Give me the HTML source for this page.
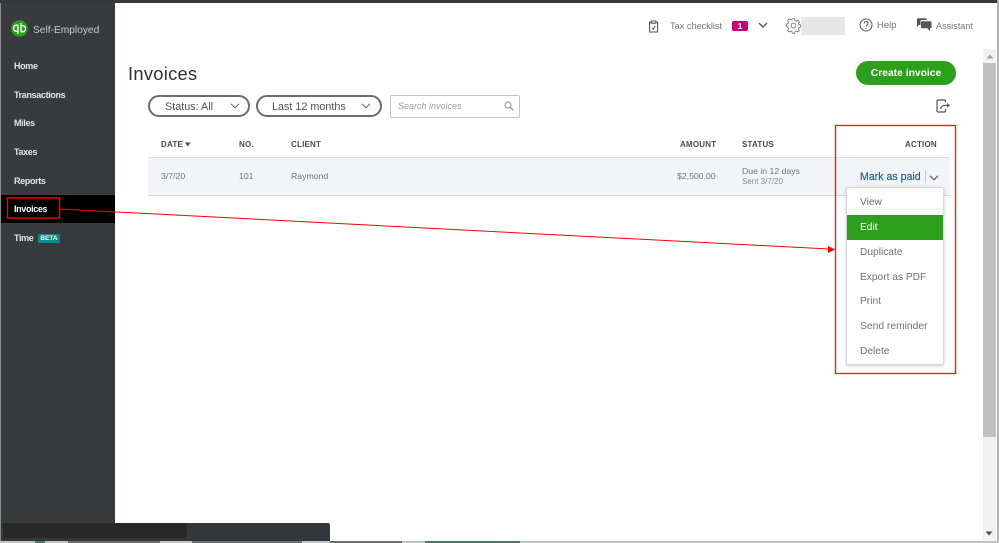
<!DOCTYPE html>
<html>
<head>
<meta charset="utf-8">
<style>
html,body{margin:0;padding:0;background:#fff;}
body{width:999px;height:543px;overflow:hidden;position:relative;font-family:"Liberation Sans",sans-serif;color:#6b6c72;}
.a{position:absolute;white-space:nowrap;}
.nav{position:absolute;left:14px;font-size:9px;letter-spacing:-.35px;font-weight:bold;color:#e4e4e6;line-height:12px;}
.th{position:absolute;top:140px;font-size:8px;font-weight:bold;color:#4a4b50;line-height:10px;letter-spacing:.2px;}
.td{position:absolute;font-size:8.7px;color:#74757a;line-height:12px;}
.mi{position:absolute;left:860px;font-size:10.2px;color:#6f7075;line-height:14px;}
.pill{position:absolute;top:95px;height:18px;border:2px solid #6b6c72;border-radius:12px;background:#fff;font-size:10.8px;color:#4f5056;line-height:20px;}
.frag{position:absolute;top:541px;height:2px;background:#6a6f6c;}
svg{position:absolute;overflow:visible;}
</style>
</head>
<body>
<!-- top bar -->
<div class="a" style="left:0;top:0;width:999px;height:3px;background:#33363a;"></div>
<!-- sidebar -->
<div class="a" style="left:1px;top:3px;width:114px;height:520px;background:#393a3d;"></div>
<div class="a" style="left:0;top:3px;width:1px;height:540px;background:#8a8a8a;"></div>
<div class="a" style="left:1px;top:195px;width:114px;height:28px;background:#000;"></div>

<svg style="left:11px;top:20px" width="18" height="18" viewBox="0 0 18 18">
<circle cx="8.5" cy="8.5" r="8.3" fill="#2ca01c"/>
<path d="M7 5.2H5.6a2.6 2.6 0 0 0 0 6.2H7M7 5.2V14M10 11.8h1.4a2.6 2.6 0 0 0 0-6.2H10M10 11.8V3" fill="none" stroke="#fff" stroke-width="1.3"/>
</svg>
<div class="a" style="left:33px;top:24px;font-size:10.2px;color:#c9cacc;line-height:13px;">Self-Employed</div>

<div class="nav" style="top:60px;">Home</div>
<div class="nav" style="top:89px;">Transactions</div>
<div class="nav" style="top:117px;">Miles</div>
<div class="nav" style="top:146px;">Taxes</div>
<div class="nav" style="top:175px;">Reports</div>
<div class="nav" style="top:203px;color:#fff;">Invoices</div>
<div class="nav" style="top:232px;">Time</div>
<div class="a" style="left:38px;top:234px;width:22px;height:9px;background:#0a8a8a;border-radius:1px;color:#fff;font-size:6.5px;font-weight:bold;line-height:10px;text-align:center;">BETA</div>

<!-- header -->
<svg style="left:648px;top:20px" width="12" height="13" viewBox="0 0 12 13">
<path d="M3.2 2.2H1.6v9.8h8V2.2H8M3.2 1h4.6v2.2H3.2z" fill="none" stroke="#55565b" stroke-width="1.1"/>
<path d="M4 8l1.2 1.2L7.2 6" fill="none" stroke="#55565b" stroke-width="1"/>
</svg>
<div class="a" style="left:670px;top:20px;font-size:9.2px;color:#74757a;line-height:12px;">Tax checklist</div>
<div class="a" style="left:732px;top:21px;width:16px;height:10px;background:#c9007a;border-radius:2px;color:#fff;font-size:8.5px;font-weight:bold;line-height:10px;text-align:center;">1</div>
<svg style="left:758px;top:22px" width="10" height="7" viewBox="0 0 10 7"><path d="M1 1l4 4 4-4" fill="none" stroke="#55565b" stroke-width="1.4"/></svg>
<svg style="left:786px;top:18px" width="15" height="15" viewBox="0 0 15 15">
<path d="M6.2 1h2.4l.4 1.8 1.3.6 1.6-.9 1.6 1.7-1 1.5.5 1.3 1.8.4v2.3l-1.8.4-.5 1.3 1 1.5-1.6 1.7-1.6-1-1.3.6-.4 1.8H6.2l-.4-1.8-1.3-.6-1.6 1-1.6-1.7 1-1.5-.5-1.3L0 8.7V6.4l1.8-.4.5-1.3-1-1.5L2.9 1l1.6 1 1.3-.6z" fill="none" stroke="#77787d" stroke-width=".9" transform="translate(.3 -.2) scale(.97)"/>
<circle cx="7.5" cy="7.5" r="2.4" fill="none" stroke="#77787d" stroke-width=".9"/>
</svg>
<div class="a" style="left:801px;top:17px;width:44px;height:18px;background:#e6e6e6;"></div>
<svg style="left:859px;top:18px" width="14" height="14" viewBox="0 0 14 14">
<circle cx="7" cy="7" r="6" fill="none" stroke="#55565b" stroke-width="1"/>
<path d="M5.2 5.5a1.9 1.9 0 1 1 2.7 1.7c-.6.3-.9.7-.9 1.4" fill="none" stroke="#55565b" stroke-width="1"/>
<circle cx="7" cy="10.4" r=".7" fill="#55565b"/>
</svg>
<div class="a" style="left:877px;top:20px;font-size:9.5px;color:#74757a;line-height:12px;">Help</div>
<svg style="left:917px;top:18px" width="15" height="14" viewBox="0 0 15 14">
<path d="M0 1.2A1 1 0 0 1 1 .2h7.5a1 1 0 0 1 1 1V2H5a1.5 1.5 0 0 0-1.5 1.5V7H2L0 9z" fill="#55565b"/>
<path d="M5 3.2h8.5a1 1 0 0 1 1 1v5a1 1 0 0 1-1 1H13V13l-2.8-2.8H5a1 1 0 0 1-1-1v-5a1 1 0 0 1 1-1z" fill="#55565b"/>
</svg>
<div class="a" style="left:936px;top:20px;font-size:9.1px;color:#74757a;line-height:12px;">Assistant</div>

<!-- title -->
<div class="a" style="left:128px;top:63px;font-size:18.3px;color:#2f3034;line-height:22px;letter-spacing:.3px;">Invoices</div>
<div class="a" style="left:856px;top:61px;width:100px;height:24px;background:#2ca01c;border-radius:12px;color:#fff;font-size:10.3px;font-weight:bold;line-height:25px;text-align:center;">Create invoice</div>

<!-- filters -->
<div class="pill" style="left:148px;width:98px;"><span style="position:absolute;left:15px;">Status: All</span></div>
<svg style="left:230px;top:103px" width="10" height="6" viewBox="0 0 10 6"><path d="M1 .8l4 4 4-4" fill="none" stroke="#55565b" stroke-width="1"/></svg>
<div class="pill" style="left:256px;width:122px;"><span style="position:absolute;left:14px;">Last 12 months</span></div>
<svg style="left:361px;top:103px" width="10" height="6" viewBox="0 0 10 6"><path d="M1 .8l4 4 4-4" fill="none" stroke="#55565b" stroke-width="1"/></svg>
<div class="a" style="left:390px;top:95px;width:128px;height:21px;border:1px solid #c4c5c9;border-radius:2px;background:#fff;"></div>
<div class="a" style="left:398px;top:101px;font-size:9px;font-style:italic;color:#9a9ba0;line-height:11px;">Search invoices</div>
<svg style="left:504px;top:101px" width="10" height="10" viewBox="0 0 10 10"><circle cx="4" cy="4" r="3" fill="none" stroke="#8f9095" stroke-width="1"/><path d="M6.2 6.2L9.3 9.3" stroke="#8f9095" stroke-width="1.2"/></svg>
<svg style="left:936px;top:99px" width="15" height="14" viewBox="0 0 15 14">
<path d="M9.5 10v2a1 1 0 0 1-1 1H2a1 1 0 0 1-1-1V2a1 1 0 0 1 1-1h6.5a1 1 0 0 1 1 1v1" fill="none" stroke="#55565b" stroke-width="1.2"/>
<path d="M4.5 10c.4-2.4 2.2-3.7 5-3.7h3" fill="none" stroke="#55565b" stroke-width="1.2"/>
<path d="M11 4l3 2.4L11 8.8z" fill="#55565b"/>
</svg>

<!-- table -->
<div class="th" style="left:161px;">DATE</div>
<svg style="left:185px;top:142px" width="6" height="5" viewBox="0 0 6 5"><path d="M0 .5h5.5L2.75 4.5z" fill="#4a4b50"/></svg>
<div class="th" style="left:239px;">NO.</div>
<div class="th" style="left:291px;">CLIENT</div>
<div class="th" style="left:680px;">AMOUNT</div>
<div class="th" style="left:742px;">STATUS</div>
<div class="th" style="left:905px;">ACTION</div>

<div class="a" style="left:148px;top:157px;width:802px;height:37px;background:#f3f4f8;border-top:1px solid #dcdde1;border-bottom:1px solid #d6d7db;"></div>
<div class="td" style="left:161px;top:170px;">3/7/20</div>
<div class="td" style="left:239px;top:170px;">101</div>
<div class="td" style="left:291px;top:170px;">Raymond</div>
<div class="td" style="left:677px;top:170px;">$2,500.00</div>
<div class="td" style="left:742px;top:165px;">Due in 12 days</div>
<div class="a" style="left:742px;top:177px;font-size:8px;color:#8a8b90;line-height:10px;">Sent 3/7/20</div>
<div class="a" style="left:860px;top:170px;font-size:10.6px;color:#1f6096;line-height:14px;-webkit-text-stroke:.2px #1f6096;">Mark as paid</div>
<div class="a" style="left:925px;top:170px;width:1px;height:13px;background:#c9cacd;"></div>
<svg style="left:929px;top:175px" width="10" height="6" viewBox="0 0 10 6"><path d="M1 .8l4 4 4-4" fill="none" stroke="#55565b" stroke-width="1.1"/></svg>

<!-- dropdown -->
<div class="a" style="left:846px;top:187px;width:96px;height:176px;background:#fff;border:1px solid #d6d7db;border-radius:2px;box-shadow:0 1px 3px rgba(0,0,0,.2);"></div>
<div class="a" style="left:847px;top:215px;width:96px;height:25px;background:#2ca01c;"></div>
<div class="mi" style="top:196px;">View</div>
<div class="mi" style="top:221px;color:#fff;">Edit</div>
<div class="mi" style="top:246px;">Duplicate</div>
<div class="mi" style="top:271px;">Export as PDF</div>
<div class="mi" style="top:295px;">Print</div>
<div class="mi" style="top:320px;font-size:10.3px;">Send reminder</div>
<div class="mi" style="top:345px;">Delete</div>

<!-- annotations -->
<svg style="left:0;top:0" width="999" height="543" viewBox="0 0 999 543">
<rect x="7.5" y="198" width="52" height="20" fill="none" stroke="#ff0000" stroke-width="1.4"/>
<rect x="835.5" y="125.5" width="120" height="248" fill="none" stroke="#ff1a1a" stroke-width="1.4"/>
<path d="M59 209L829 249" stroke="#ff0000" stroke-width="1" fill="none"/>
<path d="M835 249.5L828 246v7z" fill="#ff0000"/>
</svg>

<!-- scrollbar -->
<div class="a" style="left:983px;top:49px;width:13px;height:492px;background:#f1f1f1;"></div>
<div class="a" style="left:983px;top:63px;width:13px;height:374px;background:#c1c1c1;"></div>
<svg style="left:986px;top:54px" width="8" height="5" viewBox="0 0 8 5"><path d="M4 .5L7.5 4.5H.5z" fill="#a3a3a3"/></svg>
<svg style="left:985px;top:531px" width="8" height="5" viewBox="0 0 8 5"><path d="M.5.5h7L4 4.5z" fill="#505050"/></svg>
<div class="a" style="left:996px;top:3px;width:1px;height:538px;background:#fff;"></div>
<div class="a" style="left:997px;top:0;width:2px;height:543px;background:#b4b4b4;"></div>

<!-- bottom -->
<div class="a" style="left:1px;top:523px;width:329px;height:18px;background:#33363a;border-radius:0 2px 0 0;"></div>
<div class="a" style="left:3px;top:523px;width:184px;height:15px;background:#282828;"></div>
<div class="a" style="left:0;top:541px;width:999px;height:2px;background:#c4c4c4;"></div>
<div class="frag" style="left:35px;width:10px;background:#4d7a5c;"></div>
<div class="frag" style="left:68px;width:92px;"></div>
<div class="frag" style="left:192px;width:110px;"></div>
<div class="frag" style="left:330px;width:72px;"></div>
<div class="frag" style="left:425px;width:95px;background:#4d7a5c;"></div>
</body>
</html>
